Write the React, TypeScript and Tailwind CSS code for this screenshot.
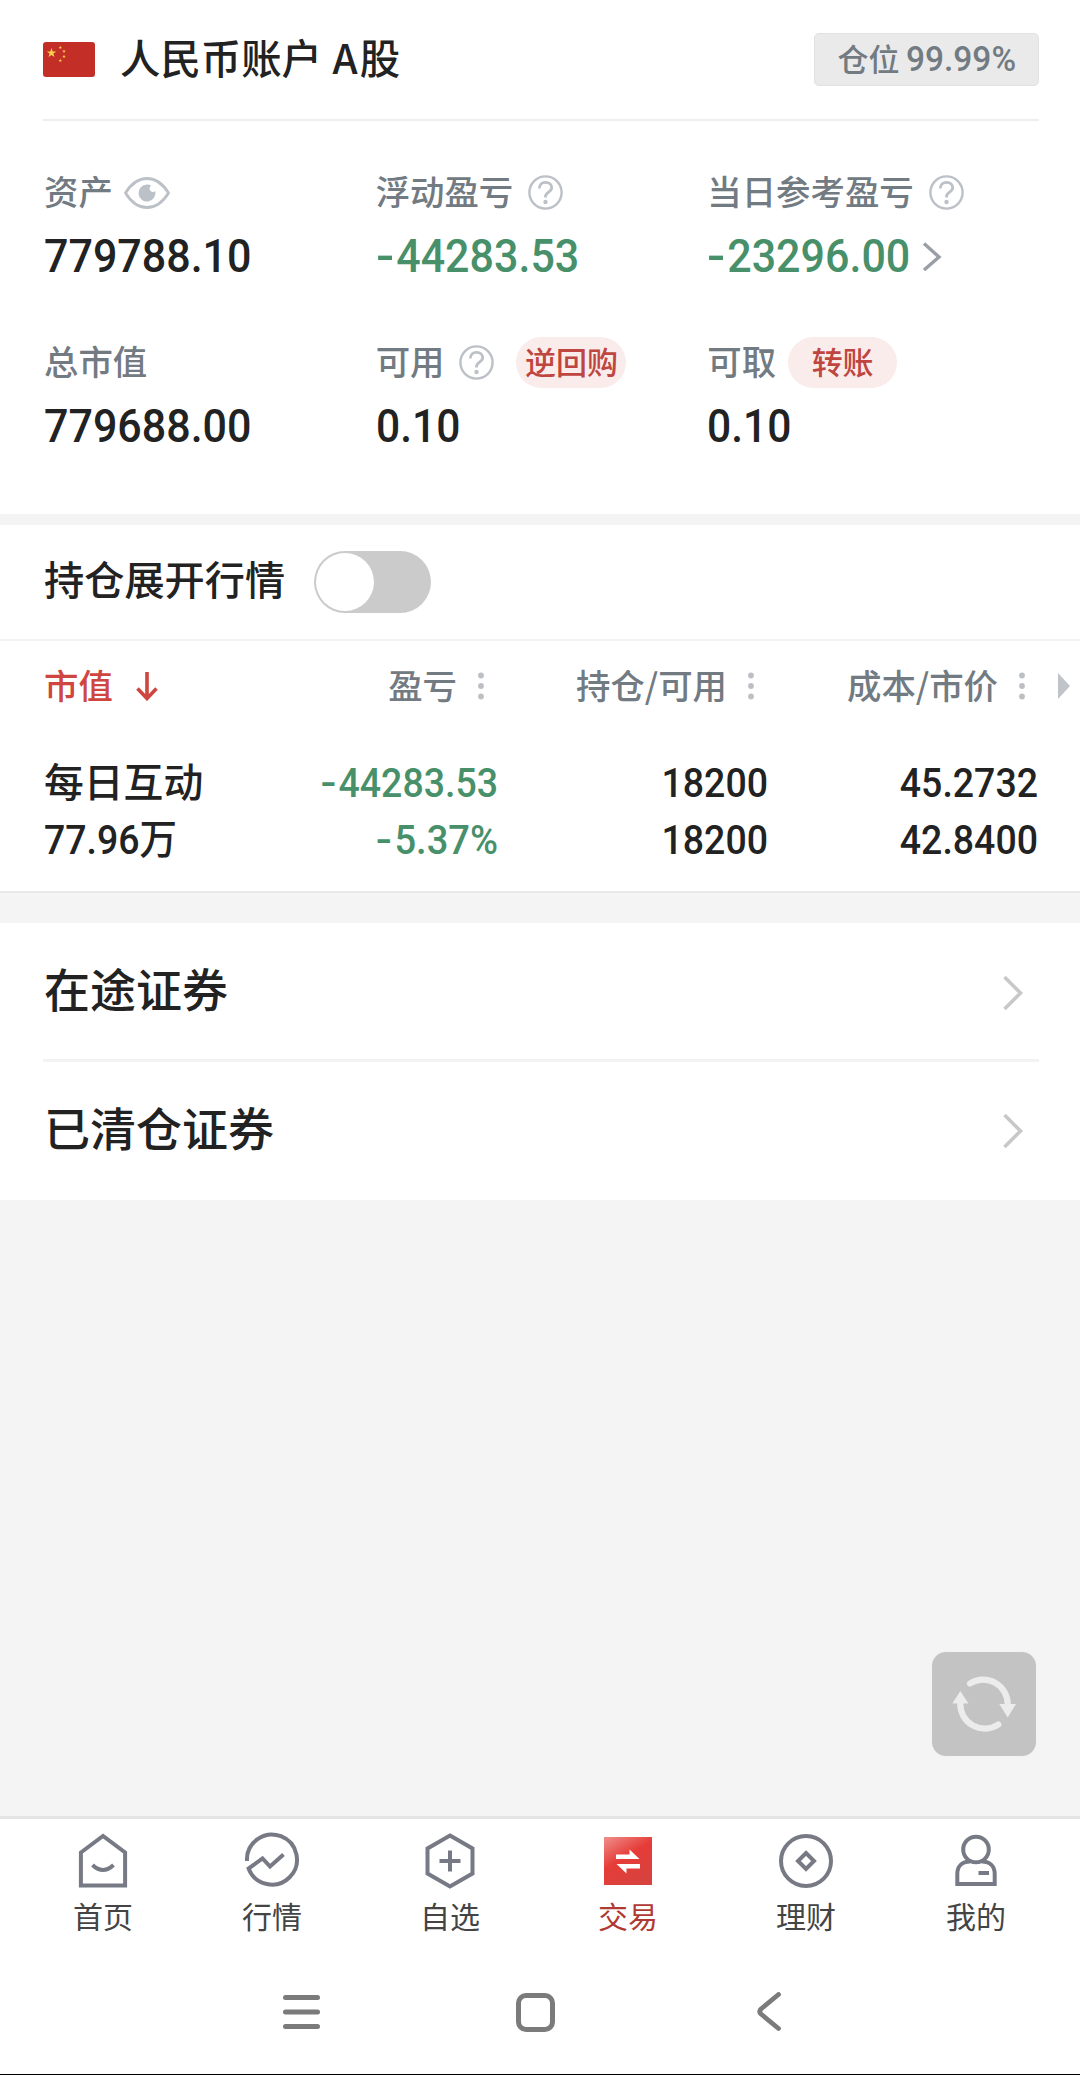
import type { ReactNode } from 'react';

function Num({ children, className }: { children: ReactNode; className: string }) {
  return (
    <span className={`inline-block whitespace-nowrap font-['Roboto','Noto_Sans_CJK_SC',sans-serif] font-medium ${className}`}>
      {children}
    </span>
  );
}

function Minus() {
  return <span className="mr-[6px] inline-block origin-left scale-x-[1.25]">-</span>;
}

function Flag() {
  const star = 'M0-5 1.2-1.6 4.8-1.5 1.9.6 3 4.1 0 2-3 4.1-1.9.6-4.8-1.5-1.2-1.6Z';
  return (
    <svg width="52" height="35" viewBox="0 0 52 35">
      <rect width="52" height="35" rx="3" fill="#c32e27" />
      <g fill="#fbd04a">
        <path d={star} transform="translate(8.5 11)" />
        <path d={star} transform="translate(17.3 5.5) scale(.38)" />
        <path d={star} transform="translate(21 9.3) scale(.38)" />
        <path d={star} transform="translate(21 14.5) scale(.38)" />
        <path d={star} transform="translate(17.3 18.5) scale(.38)" />
      </g>
    </svg>
  );
}

function Eye() {
  return (
    <svg width="46" height="32" viewBox="0 0 46 32" fill="none">
      <path d="M1.500 16C7 7 14 1.500 23 1.500S39 7 44.500 16C39 25 32 30.500 23 30.500S7 25 1.500 16Z" stroke="#bcc0c7" strokeWidth="2.800" strokeLinejoin="round" />
      <path d="M23 7.500a8.500 8.500 0 1 0 8.300 6.600c-1.200 1-3 1.200-4.400.200-1.600-1.200-1.800-3.400-.400-5.100.400-.500.600-.800.400-1A8.500 8.500 0 0 0 23 7.500Z" fill="#bcc0c7" />
    </svg>
  );
}

function Help() {
  return (
    <svg width="35" height="35" viewBox="0 0 35 35" fill="none" stroke="#bcc0c7" strokeWidth="2.400">
      <circle cx="17.500" cy="17.500" r="16.100" />
      <path d="M11.300 13.500c0-3.800 2.700-6.200 6.200-6.200s6.200 2.300 6.200 5.500c0 4.300-6.200 4.400-6.200 8.600v1.100" strokeWidth="2.800" />
      <circle cx="17.500" cy="27" r="2.200" fill="#bcc0c7" stroke="none" />
    </svg>
  );
}

function Dots() {
  return (
    <svg width="6" height="28" viewBox="0 0 6 28" fill="#bcbfc4">
      <circle cx="3" cy="3.500" r="2.900" />
      <circle cx="3" cy="14" r="2.900" />
      <circle cx="3" cy="24.500" r="2.900" />
    </svg>
  );
}

function Label({ children }: { children: ReactNode }) {
  return <span className="-mt-[5px] text-[34.400px] leading-[50px] font-medium text-[#727a82]">{children}</span>;
}

function Pill({ children, className }: { children: ReactNode; className: string }) {
  return (
    <span className={`flex h-[51px] items-center justify-center rounded-full bg-[#f9ecea] pb-[3px] text-[31px] font-medium text-[#bf4640] ${className}`}>
      {children}
    </span>
  );
}

function ListRow({ children, className }: { children: ReactNode; className: string }) {
  return (
    <div className={`flex items-center justify-between pr-[15px] pl-[1px] text-[46px] font-medium text-[#222] ${className}`}>
      <span className="-mt-[10px]">{children}</span>
      <svg width="24" height="36" viewBox="0 0 24 36" fill="none" stroke="#c8c8c8" strokeWidth="3.600">
        <path d="M4.500 2 20.500 18 4.500 34" />
      </svg>
    </div>
  );
}

const tabs: { label: string; active?: boolean; icon: ReactNode }[] = [
  {
    label: '首页',
    icon: (
      <>
        <path d="M5.900 20.500 28 4 50.100 20.500V53.500H5.900Z" />
        <path d="M17.500 33q10.500 10 21 0" />
      </>
    ),
  },
  {
    label: '行情',
    icon: <path d="M3 29A25 25 0 1 1 4.600 36.500L18.500 26.500 26 34.500 39.500 22.500" />,
  },
  {
    label: '自选',
    icon: (
      <>
        <path d="M28 3.500 50.500 16.500V41.500L28 54.500 5.500 41.500V16.500Z" />
        <path d="M28 18.500V39.500M17.500 29H38.500" />
      </>
    ),
  },
  {
    label: '交易',
    active: true,
    icon: (
      <>
        <defs>
          <linearGradient id="tradeFill" x1="0" y1="0" x2=".6" y2="1">
            <stop offset="0" stopColor="#ef8f8b" />
            <stop offset=".5" stopColor="#e63c38" />
            <stop offset="1" stopColor="#d8423e" />
          </linearGradient>
        </defs>
        <rect x="4" y="5" width="48" height="48" fill="url(#tradeFill)" stroke="none" />
        <path d="M16 22.500H29.500V17.500L39.500 27H16ZM40 36.500H26.500V41.500L16.500 32H40Z" fill="#fff" stroke="none" />
      </>
    ),
  },
  {
    label: '理财',
    icon: (
      <>
        <circle cx="28" cy="29" r="25" />
        <path d="M28 21 36 29 28 37 20 29Z" />
      </>
    ),
  },
  {
    label: '我的',
    icon: (
      <>
        <circle cx="28" cy="17.500" r="12.800" />
        <path d="M22 29.500C14 29.500 9.300 34.500 9.300 42V52H46.700V42C46.700 34.500 42 29.500 34 29.500" />
        <path d="M30.500 41H41" />
      </>
    ),
  },
];

export default function App() {
  return (
    <div className="flex h-[2075px] w-[1080px] flex-col bg-[#f4f4f4] font-['Noto_Sans_CJK_SC',sans-serif] text-[#222]">
      <section className="h-[514px] bg-white pr-[41px] pl-[43px]">
        <header className="flex h-[121px] items-center justify-between border-b-2 border-[#eceeef]">
          <div className="flex items-center">
            <Flag />
            <h1 className="-mt-[6px] ml-[25px] text-[40.400px] leading-[60px] font-medium [word-spacing:1.500px]">
              人民币账户 <span className="mr-[2px]">A</span>股
            </h1>
          </div>
          <div className="flex h-[53px] w-[225px] items-center justify-center rounded-[5px] border border-[#e1e1e1] bg-[#eaeaea] text-[31px] font-medium whitespace-nowrap text-[#727a82]">
            <span className="-mt-[3px]">仓位</span>
            <Num className="mt-[1px] ml-[6px] w-[110px] origin-left scale-x-[0.97] text-[34.500px]">99.99%</Num>
          </div>
        </header>
        <div className="grid auto-rows-[170px] grid-cols-3 pl-[1px]">
          <div className="pt-[46px]">
            <div className="flex h-[51px] items-center">
              <Label>资产</Label>
              <span className="ml-[11px]"><Eye /></span>
            </div>
            <Num className="origin-left scale-x-[0.935] text-[46px] leading-[76px]">779788.10</Num>
          </div>
          <div className="pt-[46px]">
            <div className="flex h-[51px] items-center">
              <Label>浮动盈亏</Label>
              <span className="ml-[15px]"><Help /></span>
            </div>
            <Num className="origin-left scale-x-[0.935] text-[46px] leading-[76px] text-[#47906a]"><Minus />44283.53</Num>
          </div>
          <div className="pt-[46px]">
            <div className="flex h-[51px] items-center">
              <Label>当日参考盈亏</Label>
              <span className="ml-[15px]"><Help /></span>
            </div>
            <div className="flex items-center">
              <Num className="origin-left scale-x-[0.935] text-[46px] leading-[76px] text-[#47906a]"><Minus />23296.00</Num>
              <svg className="-ml-[3px]" width="20" height="30" viewBox="0 0 20 30" fill="none" stroke="#9a9fa7" strokeWidth="3.400">
                <path d="M2 2.500 17 16 2 29" />
              </svg>
            </div>
          </div>
          <div className="pt-[46px]">
            <div className="flex h-[51px] items-center">
              <Label>总市值</Label>
            </div>
            <Num className="origin-left scale-x-[0.935] text-[46px] leading-[76px]">779688.00</Num>
          </div>
          <div className="pt-[46px]">
            <div className="flex h-[51px] items-center">
              <Label>可用</Label>
              <span className="ml-[15px]"><Help /></span>
              <Pill className="ml-[22px] w-[110px]">逆回购</Pill>
            </div>
            <Num className="origin-left scale-x-[0.925] text-[46px] leading-[76px]">0.10</Num>
          </div>
          <div className="pt-[46px]">
            <div className="flex h-[51px] items-center">
              <Label>可取</Label>
              <Pill className="ml-[12px] w-[109px]">转账</Pill>
            </div>
            <Num className="origin-left scale-x-[0.925] text-[46px] leading-[76px]">0.10</Num>
          </div>
        </div>
      </section>

      <section className="mt-[11px] flex h-[116px] items-center border-b-2 border-[#f3f3f3] bg-white pl-[44px]">
        <span className="-mt-[8px] text-[40.200px] leading-[60px] font-medium">持仓展开行情</span>
        <span className="ml-[29px] flex h-[62px] w-[117px] items-center rounded-full bg-[#cbcbcb] pl-[2px]">
          <span className="h-[58px] w-[58px] rounded-full bg-white" />
        </span>
      </section>

      <section className="h-[252px] border-b-2 border-[#e9e9e9] bg-white">
        <div className="grid h-[90px] grid-cols-[254px_233px_270px_271px_1fr] items-center text-[34.400px] font-medium whitespace-nowrap text-[#727a82]">
          <div className="flex items-center pl-[44px] text-[#cf4640]">
            <span className="-mt-[3px]">市值</span>
            <svg className="ml-[23px]" width="22" height="30" viewBox="0 0 22 30" fill="none" stroke="#cf4640" strokeWidth="3.600">
              <path d="M11 1V27M1.500 17.500 11 27.500 20.500 17.500" />
            </svg>
          </div>
          <div className="flex items-center justify-end gap-[21px] pr-[3px]"><span className="-mt-[3px]">盈亏</span><Dots /></div>
          <div className="flex items-center justify-end gap-[21px] pr-[3px]"><span className="-mt-[3px]">持仓/可用</span><Dots /></div>
          <div className="flex items-center justify-end gap-[21px] pr-[3px]"><span className="-mt-[3px]">成本/市价</span><Dots /></div>
          <svg className="ml-[30px]" width="12" height="26" viewBox="0 0 12 26" fill="#c0c3c8">
            <path d="M0 0 12 13 0 26Z" />
          </svg>
        </div>
        <div className="mt-[24px] grid grid-cols-[254px_244px_270px_270px] text-right text-[40.500px] leading-[57px]">
          <div className="-mt-[4px] pl-[44px] text-left text-[39.800px] font-medium">每日互动</div>
          <Num className="origin-right scale-x-[0.925] text-[#47906a]"><Minus />44283.53</Num>
          <Num className="origin-right scale-x-[0.925]">18200</Num>
          <Num className="origin-right scale-x-[0.925]">45.2732</Num>
          <div className="-mt-[4px] pl-[44px] text-left"><Num className="origin-left scale-x-[0.925]">77.96万</Num></div>
          <Num className="origin-right scale-x-[0.94] text-[#47906a]"><Minus />5.37%</Num>
          <Num className="origin-right scale-x-[0.925]">18200</Num>
          <Num className="origin-right scale-x-[0.925]">42.8400</Num>
        </div>
      </section>

      <section className="mt-[30px] h-[277px] bg-white pr-[41px] pl-[43px]">
        <ListRow className="h-[136px] pt-[3px]">在途证券</ListRow>
        <div className="h-[3px] bg-[#f3f3f3]" />
        <ListRow className="h-[138px]">已清仓证券</ListRow>
      </section>

      <div className="flex flex-1 items-end justify-end pr-[44px] pb-[60px]">
        <button className="flex h-[104px] w-[104px] items-center justify-center rounded-[14px] bg-[#c3c3c3]">
          <svg width="68" height="68" viewBox="0 0 68 68" fill="none" stroke="#ececec" strokeWidth="6.200" strokeLinecap="round">
            <path d="M20 13.500A24.500 24.500 0 0 1 57.700 35" />
            <path d="M48.300 54.500A24.500 24.500 0 0 1 10.300 33" />
            <path d="M49.300 34H66L57.700 47.500ZM18.500 33.500H2.300L10.300 21Z" fill="#ececec" stroke="none" />
          </svg>
        </button>
      </div>

      <nav className="grid h-[134px] grid-cols-[160px_178px_178px_178px_178px_162px] border-t-3 border-[#e4e4e4] bg-white pt-[13px] pl-[23px]">
        {tabs.map((t) => (
          <div key={t.label} className="flex flex-col items-center">
            <svg width="56" height="58" viewBox="0 0 56 58" fill="none" stroke="#777a84" strokeWidth="4">
              {t.icon}
            </svg>
            <span className={t.active ? 'text-[30px] leading-[50px] text-[#b03a33]' : 'text-[30px] leading-[50px] text-[#444]'}>{t.label}</span>
          </div>
        ))}
      </nav>

      <footer className="flex h-[125px] items-center border-b border-black bg-white pl-[283px]">
        <svg width="37" height="40" viewBox="0 0 37 40" stroke="#7b7b7b" strokeWidth="5" strokeLinecap="round">
          <path d="M2.500 5.500h32M2.500 20h32M2.500 34.500h32" />
        </svg>
        <span className="ml-[196px] h-[39px] w-[39px] rounded-[10px] border-5 border-[#7b7b7b]" />
        <svg className="ml-[201px]" width="26" height="40" viewBox="0 0 26 40" fill="none" stroke="#7b7b7b" strokeWidth="4.800" strokeLinecap="round" strokeLinejoin="round">
          <path d="M22.500 2.500 5 17Q2.500 19.500 5 22L22.500 36.500" />
        </svg>
      </footer>
    </div>
  );
}
